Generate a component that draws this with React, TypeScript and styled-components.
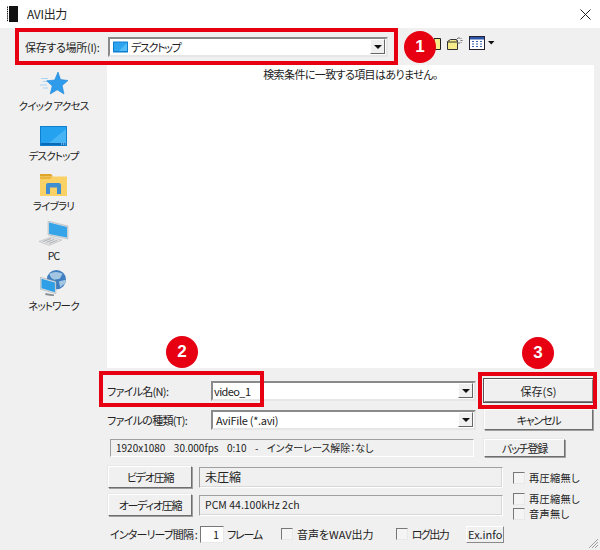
import styled, { createGlobalStyle } from 'styled-components';

const GlobalStyle = createGlobalStyle`
  html, body {
    margin: 0;
    padding: 0;
    background: #f0f0f0;
  }
  * {
    box-sizing: border-box;
  }
`;

const Dialog = styled.div`
  position: relative;
  width: 600px;
  height: 550px;
  overflow: hidden;
  background: #f0f0f0;
  color: #222;
  font-family: "Noto Sans CJK JP", "Noto Sans", sans-serif;
  font-size: 11px;
  line-height: 14px;
  font-feature-settings: "palt";
`;

const TitleBar = styled.div`
  height: 28px;
  background: #fff;
  display: flex;
  align-items: center;
  padding: 0 7px;
  gap: 9px;
  font-size: 12px;
  letter-spacing: -0.3px;
`;

const CloseButton = styled.div`
  margin-left: auto;
  margin-right: 2px;
  display: flex;
`;

const Toolbar = styled.div`
  height: 37px;
  display: flex;
  align-items: center;
  padding: 0 0 0 25px;
`;

const ToolbarLabel = styled.span`
  width: 83px;
  letter-spacing: -0.3px;
  white-space: nowrap;
`;

const ComboBox = styled.div<{ $width: number }>`
  width: ${(p) => p.$width}px;
  height: 20px;
  display: flex;
  align-items: center;
  background: #fff;
  border: 2px solid;
  border-color: #8a8a8a #e6e6e6 #e6e6e6 #8a8a8a;
  padding: 0 1px 0 3px;
  font-size: 11px;
`;

const ComboText = styled.span<{ $spacing?: number }>`
  flex: 1;
  display: flex;
  align-items: center;
  gap: 3px;
  letter-spacing: ${(p) => p.$spacing ?? 0}px;
  white-space: nowrap;
`;

const FileNameText = styled(ComboText)`
  margin-left: -2px;
`;

const DropArrow = styled.div`
  width: 15px;
  height: 15px;
  background: #f0f0f0;
  border: 1px solid;
  border-color: #fff #666 #666 #fff;
  display: flex;
  align-items: center;
  justify-content: center;

  &::after {
    content: '';
    border-left: 4px solid transparent;
    border-right: 4px solid transparent;
    border-top: 4px solid #111;
  }
`;

const ToolIcons = styled.div`
  margin-left: 46px;
  margin-top: -7px;
  display: flex;
  align-items: center;
  gap: 6px;
`;

const Middle = styled.div`
  height: 303px;
  display: flex;
`;

const Sidebar = styled.div`
  width: 107px;
  padding-top: 5px;
  flex-shrink: 0;
`;

const Place = styled.div`
  height: 50px;
  display: flex;
  flex-direction: column;
  align-items: center;
  justify-content: flex-end;
  padding-bottom: 7px;
  gap: 3px;
  font-size: 10.500px;
  letter-spacing: -0.8px;
  white-space: nowrap;
`;

const FileList = styled.div`
  width: 487px;
  background: #fff;
  text-align: center;
  padding-top: 2px;
  letter-spacing: -0.6px;
`;

const Form = styled.div`
  display: flex;
  flex-direction: column;
  padding-top: 11px;
`;

const Row = styled.div<{ $top?: number; $left: number; $gap?: number; $height: number }>`
  display: flex;
  align-items: center;
  height: ${(p) => p.$height}px;
  margin-top: ${(p) => p.$top ?? 0}px;
  margin-left: ${(p) => p.$left}px;
  gap: ${(p) => p.$gap ?? 0}px;
  white-space: nowrap;
`;

const FieldLabel = styled.span`
  width: 104px;
  letter-spacing: -0.7px;
`;

const Button = styled.div<{ $width: number; $height: number }>`
  width: ${(p) => p.$width}px;
  height: ${(p) => p.$height}px;
  flex-shrink: 0;
  display: flex;
  align-items: center;
  justify-content: center;
  background: #f0f0f0;
  border: 1px solid;
  border-color: #fff #6e6e6e #6e6e6e #fff;
  box-shadow: 1px 1px 0 #a0a0a0, -1px -1px 0 #e8e8e8;
  letter-spacing: -1.200px;
`;

const DialogButton = styled(Button)`
  margin-left: 8px;
`;

const DefaultButton = styled(DialogButton)`
  outline: 1px solid #555;
  outline-offset: 0;
  border-color: #fff #808080 #808080 #fff;
  letter-spacing: 0;
`;

const InfoField = styled.div`
  width: 364px;
  height: 18px;
  display: flex;
  align-items: center;
  padding-left: 5px;
  border: 1px solid;
  border-color: #a0a0a0 #fff #fff #a0a0a0;
  font-size: 10px;
  word-spacing: 2px;
  white-space: pre;
`;

const CodecField = styled.div<{ $large?: boolean }>`
  width: 304px;
  height: 21px;
  flex-shrink: 0;
  display: flex;
  align-items: center;
  padding-left: 5px;
  border: 1px solid;
  border-color: #a0a0a0 #fff #fff #a0a0a0;
  box-shadow: inset -1px -1px 0 #d8d8d8;
  font-size: ${(p) => (p.$large ? 12 : 10.5)}px;
`;

const CheckColumn = styled.div`
  display: flex;
  flex-direction: column;
  gap: 1px;
  margin-left: 3px;
  margin-top: 2px;
  font-size: 10.200px;
  letter-spacing: 0.3px;
`;

const CheckItem = styled.label<{ $left?: number; $spacing?: number }>`
  display: flex;
  align-items: center;
  gap: 4px;
  margin-left: ${(p) => p.$left ?? 0}px;
  ${(p) => (p.$spacing === undefined ? '' : `letter-spacing: ${p.$spacing}px;`)}
`;

const CheckBox = styled.span`
  width: 12px;
  height: 12px;
  flex-shrink: 0;
  background: #f4f4f4;
  border: 1px solid;
  border-color: #777 #e8e8e8 #e8e8e8 #777;
`;

const IntervalLabel = styled.span`
  width: 90px;
  letter-spacing: -0.85px;
`;

const FrameLabel = styled.span`
  letter-spacing: -1.200px;
`;

const NumberBox = styled.div`
  width: 24px;
  height: 17px;
  margin-right: 3px;
  background: #fff;
  border: 1px solid;
  border-color: #777 #e8e8e8 #e8e8e8 #777;
  text-align: right;
  line-height: 15px;
  padding-right: 4px;
`;

const ExInfoButton = styled.div`
  width: 38px;
  height: 17px;
  margin-left: 18px;
  display: flex;
  align-items: center;
  justify-content: center;
  border: 1px solid;
  border-color: #fff #8a8a8a #8a8a8a #fff;
`;

const Highlight = styled.div<{ $x: number; $y: number; $w: number; $h: number }>`
  position: absolute;
  left: ${(p) => p.$x}px;
  top: ${(p) => p.$y}px;
  width: ${(p) => p.$w}px;
  height: ${(p) => p.$h}px;
  border: 4px solid #e60012;
`;

const Badge = styled.div<{ $x: number; $y: number }>`
  position: absolute;
  left: ${(p) => p.$x - 16}px;
  top: ${(p) => p.$y - 16}px;
  width: 32px;
  height: 32px;
  border-radius: 50%;
  background: #e60012;
  color: #fff;
  display: flex;
  align-items: center;
  justify-content: center;
  font-family: "Liberation Sans", Arial, sans-serif;
  font-size: 17px;
  font-weight: 700;
`;

const ResizeGrip = styled.svg`
  position: absolute;
  right: 1px;
  bottom: 1px;
`;

const AppIcon = () => (
  <svg width="11" height="16" viewBox="0 0 11 16">
    <rect x="2" y="0" width="9" height="16" fill="#111" />
    <path d="M0.5 0.5v15" stroke="#111" strokeWidth="1" strokeDasharray="1.4 0.8" />
  </svg>
);

const CloseIcon = () => (
  <svg width="11" height="11" viewBox="0 0 11 11">
    <path d="M0.5 0.5l10 10M10.5 0.5l-10 10" stroke="#222" strokeWidth="1" fill="none" />
  </svg>
);

const SmallDesktopIcon = () => (
  <svg width="15" height="12" viewBox="0 0 15 12">
    <rect x="0" y="0.5" width="15" height="11" rx="0.5" fill="#0d7fd0" />
    <rect x="1" y="1.5" width="13" height="8.5" fill="#2fa4ee" />
    <path d="M6 10L14 2v8z" fill="#55bdf6" />
  </svg>
);

const FolderIcon = () => (
  <svg width="7" height="13" viewBox="0 0 7 13">
    <path d="M0 1.500h6.500v11H0z" fill="#f6ec8a" stroke="#222" />
  </svg>
);

const NewFolderIcon = () => (
  <svg width="16" height="14" viewBox="0 0 16 14">
    <path d="M.5 13.500V5.500l3-2h6l1 1v9z" fill="#f6ec8a" stroke="#333" />
    <path d="M.5 6h10" stroke="#333" />
    <path d="M12 1v2M12 6v2M9 4.500h1.500M13.500 4.500H15.500M10 2l1 1M14.500 2l-1 1M10 7l1-1M14.500 7l-1-1" stroke="#6f6f6f" />
  </svg>
);

const ViewIcon = () => (
  <svg width="26" height="14" viewBox="0 0 26 14">
    <rect x="0.500" y="0.500" width="15" height="13" fill="#fff" stroke="#223" />
    <rect x="1" y="1" width="14" height="2.500" fill="#2b55a8" />
    <path d="M3 5.500h2M7 5.500h2M11 5.500h2M3 8h2M7 8h2M11 8h2M3 10.500h2M7 10.500h2M11 10.500h2" stroke="#3a62b0" strokeWidth="1.200" />
    <path d="M19 5h6.500l-3.250 3.500z" fill="#111" />
  </svg>
);

const StarIcon = () => (
  <svg width="28" height="24" viewBox="0 0 28 24">
    <path d="M1 6.500h7M3 9.500h6M0 13h7M3 16h5" stroke="#a9d4f3" strokeWidth="1" />
    <path
      d="M18 0l2.500 7.500 7.500 1-5.800 5 1.800 8.500-6.800-4.200-7 4.200 2-8-5.500-5.200 8-.8z"
      fill="#2f9beb"
      stroke="#1c86d8"
      strokeWidth="0.600"
    />
  </svg>
);

const DesktopIcon = () => (
  <svg width="27" height="20" viewBox="0 0 27 20">
    <rect x="0" y="0" width="27" height="20" fill="#0f80cf" />
    <rect x="1" y="1" width="25" height="16" fill="#25a2ef" />
    <path d="M9 17L26 3v14z" fill="#45b5f5" />
    <rect x="1" y="17" width="25" height="2" fill="#0b6cb5" />
    <path d="M21 18h1.200M23 18h1.200M25 18h.8" stroke="#cde8fa" />
  </svg>
);

const LibraryIcon = () => (
  <svg width="27" height="22" viewBox="0 0 27 22">
    <path d="M0 0h11l2 2.500h-13z" fill="#e0a526" />
    <path d="M0 2.500h27V22H0z" fill="#fad165" />
    <path d="M0 2.500h12.500L10 5H0z" fill="#e9b53f" />
    <path d="M6 20v-9q0-2 2-2h11q2 0 2 2v9h-4v-6.500h-7V20z" fill="#3f8ed2" />
  </svg>
);

const PcIcon = () => (
  <svg width="30" height="25" viewBox="0 0 30 25">
    <path d="M9 0l20 5v13L9 14z" fill="#d6d9dc" stroke="#a8acb0" strokeWidth="0.500" />
    <path d="M10 1.500l18 4.500v10.500l-18-3.500z" fill="#35a4e8" />
    <path d="M0 20.500l12-4.500 11 3-13 5.500z" fill="#dfe1e3" stroke="#b0b3b6" strokeWidth="0.500" />
    <path d="M4 20.500l8-3M7 21.500l8-3M10 22.500l8-3" stroke="#a4a7aa" strokeWidth="0.800" />
  </svg>
);

const NetworkIcon = () => (
  <svg width="27" height="27" viewBox="0 0 27 27">
    <circle cx="16.500" cy="10" r="10" fill="#3f7fc0" />
    <path d="M9 4q7-4 14 0l-3 5-6 1-3-2zM19 12l7-2 .5 3-6 5z" fill="#a4c6e2" />
    <path d="M0 7.500l16 4.500v12.500L0 20z" fill="#dfe3e6" stroke="#9aa0a5" strokeWidth="0.500" />
    <path d="M1 9l14 4v10L1 19z" fill="#2f9fe6" />
    <path d="M5 25l9 1.500" stroke="#8d9297" strokeWidth="2" />
  </svg>
);

const places = [
  { name: 'クイック アクセス', icon: <StarIcon /> },
  { name: 'デスクトップ', icon: <DesktopIcon /> },
  { name: 'ライブラリ', icon: <LibraryIcon /> },
  { name: 'PC', icon: <PcIcon /> },
  { name: 'ネットワーク', icon: <NetworkIcon /> },
];

export default function App() {
  return (
    <Dialog>
      <GlobalStyle />
      <TitleBar>
        <AppIcon />
        <span>AVI出力</span>
        <CloseButton>
          <CloseIcon />
        </CloseButton>
      </TitleBar>

      <Toolbar>
        <ToolbarLabel>保存する場所(I):</ToolbarLabel>
        <ComboBox $width={280}>
          <ComboText $spacing={-1.3}>
            <SmallDesktopIcon />
            デスクトップ
          </ComboText>
          <DropArrow />
        </ComboBox>
        <ToolIcons>
          <FolderIcon />
          <NewFolderIcon />
          <ViewIcon />
        </ToolIcons>
      </Toolbar>

      <Middle>
        <Sidebar>
          {places.map((place) => (
            <Place key={place.name}>
              {place.icon}
              {place.name}
            </Place>
          ))}
        </Sidebar>
        <FileList>検索条件に一致する項目はありません。</FileList>
      </Middle>

      <Form>
        <Row $left={107} $height={23}>
          <FieldLabel>ファイル名(N):</FieldLabel>
          <ComboBox $width={265}>
            <FileNameText $spacing={-0.6}>video_1</FileNameText>
            <DropArrow />
          </ComboBox>
          <DefaultButton $width={109} $height={23}>保存(S)</DefaultButton>
        </Row>
        <Row $top={7} $left={107} $height={21}>
          <FieldLabel>ファイルの種類(T):</FieldLabel>
          <ComboBox $width={265}>
            <ComboText $spacing={-0.3}>AviFile (*.avi)</ComboText>
            <DropArrow />
          </ComboBox>
          <DialogButton $width={109} $height={21}>キャンセル</DialogButton>
        </Row>
        <Row $top={9} $left={110} $gap={10} $height={18}>
          <InfoField>1920x1080  30.000fps  0:10  -  インターレース解除：なし</InfoField>
          <Button $width={81} $height={18}>バッチ登録</Button>
        </Row>
        <Row $top={9} $left={108} $gap={7} $height={22}>
          <Button $width={84} $height={22}>ビデオ圧縮</Button>
          <CodecField $large>未圧縮</CodecField>
          <CheckColumn>
            <CheckItem>
              <CheckBox />
              再圧縮無し
            </CheckItem>
          </CheckColumn>
        </Row>
        <Row $top={6} $left={108} $gap={7} $height={22}>
          <Button $width={84} $height={22}>オーディオ圧縮</Button>
          <CodecField>PCM 44.100kHz 2ch</CodecField>
          <CheckColumn>
            <CheckItem>
              <CheckBox />
              再圧縮無し
            </CheckItem>
            <CheckItem>
              <CheckBox />
              音声無し
            </CheckItem>
          </CheckColumn>
        </Row>
        <Row $top={9} $left={110} $height={18}>
          <IntervalLabel>インターリーブ間隔 :</IntervalLabel>
          <NumberBox>1</NumberBox>
          <FrameLabel>フレーム</FrameLabel>
          <CheckItem $left={19}>
            <CheckBox />
            音声をWAV出力
          </CheckItem>
          <CheckItem $left={22} $spacing={-1.5}>
            <CheckBox />
            ログ出力
          </CheckItem>
          <ExInfoButton>Ex.info</ExInfoButton>
        </Row>
      </Form>

      <Highlight $x={15} $y={28} $w={383} $h={37} />
      <Highlight $x={99} $y={371} $w={165} $h={36} />
      <Highlight $x={478} $y={372} $w={119} $h={37} />
      <Badge $x={420} $y={47}>1</Badge>
      <Badge $x={182} $y={352}>2</Badge>
      <Badge $x={538} $y={353}>3</Badge>

      <ResizeGrip width="12" height="12" viewBox="0 0 12 12">
        <path d="M11 2L2 11M11 5L5 11M11 8L8 11" stroke="#a0a0a0" fill="none" />
      </ResizeGrip>
    </Dialog>
  );
}
